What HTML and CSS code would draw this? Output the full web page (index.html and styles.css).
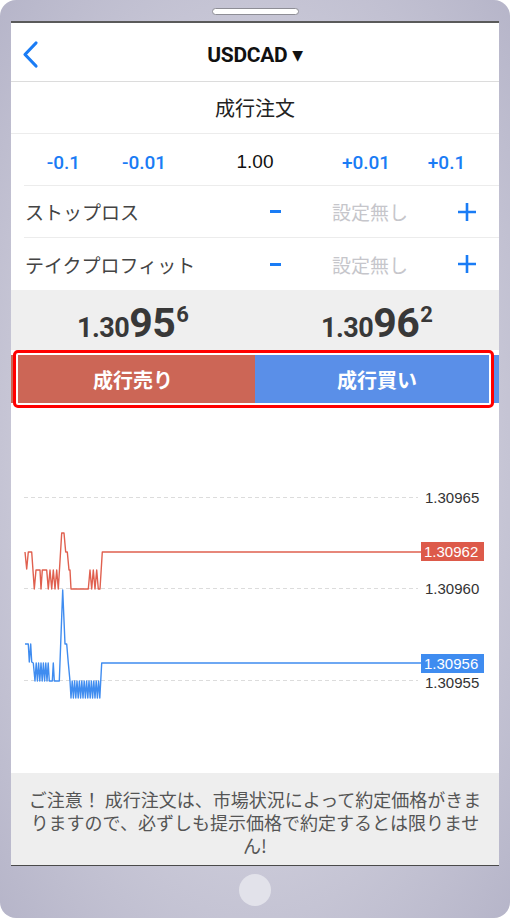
FILE: index.html
```html
<!DOCTYPE html>
<html lang="ja">
<head>
  <meta charset="UTF-8" />
  <meta name="viewport" content="width=device-width, initial-scale=1.0"/>
  <title>USDCAD 成行注文</title>
  <link rel="stylesheet" href="styles.css">
</head>
<body>
  <div class="phone">
    <div class="phone-top"><span class="speaker"></span></div>

    <div class="screen">
      <!-- Navigation -->
      <header class="nav">
        <div class="nav-side">
          <svg class="back" width="20" height="30" viewBox="0 0 20 30">
            <path d="M15 3 L4 14.5 L15 26" fill="none" stroke="#1a7cf5" stroke-width="3.2" stroke-linecap="round" stroke-linejoin="round"/>
          </svg>
        </div>
        <div class="nav-title">USDCAD <span class="caret">&#9660;</span></div>
        <div class="nav-side"></div>
      </header>

      <div class="order-type">成行注文</div>

      <!-- Lot size -->
      <div class="row lot-row">
        <span class="step">-0.1</span>
        <span class="step">-0.01</span>
        <span class="lot">1.00</span>
        <span class="step">+0.01</span>
        <span class="step">+0.1</span>
      </div>

      <!-- Stop loss / take profit -->
      <div class="row sltp-row">
        <span class="sltp-label">ストップロス</span>
        <span class="minus"></span>
        <span class="sltp-value">設定無し</span>
        <svg class="plus" width="20" height="20" viewBox="0 0 20 20">
          <path d="M10 1 V19 M1 10 H19" stroke="#1a7cf5" stroke-width="2.6"/>
        </svg>
      </div>
      <div class="row sltp-row last">
        <span class="sltp-label">テイクプロフィット</span>
        <span class="minus"></span>
        <span class="sltp-value">設定無し</span>
        <svg class="plus" width="20" height="20" viewBox="0 0 20 20">
          <path d="M10 1 V19 M1 10 H19" stroke="#1a7cf5" stroke-width="2.6"/>
        </svg>
      </div>

      <!-- Bid / ask -->
      <div class="prices">
        <div class="price"><span class="p-small">1.30</span><span class="p-big">95</span><span class="p-sup">6</span></div>
        <div class="price"><span class="p-small">1.30</span><span class="p-big">96</span><span class="p-sup">2</span></div>
      </div>

      <div class="actions">
        <button class="btn sell">成行売り</button>
        <button class="btn buy">成行買い</button>
        <div class="highlight"></div>
      </div>

      <!-- Tick chart -->
      <div class="chart">
        <svg width="488" height="365" viewBox="0 0 488 365">
          <g stroke="#dcdcdc" stroke-width="1" stroke-dasharray="4 3">
            <line x1="13" y1="89.5" x2="407" y2="89.5"/>
            <line x1="13" y1="180.5" x2="407" y2="180.5"/>
            <line x1="13" y1="272.5" x2="407" y2="272.5"/>
          </g>
          <g class="axis">
            <text x="414" y="95">1.30965</text>
            <text x="414" y="186">1.30960</text>
            <text x="414" y="280">1.30955</text>
          </g>

          <polyline fill="none" stroke="#e0604f" stroke-width="1.4" stroke-linejoin="round"
            points="14,144 15.7,161 17.3,144 20.7,144 23.3,181 25,162 29,162 30,181 31.3,162 35.7,162 37.3,181 39,162 40.7,181 42.3,162 44,181 45.7,162 47.3,181 50.7,125 53,125 54.7,144 56.3,144 58,162 59,162 60,181 77.3,181 79,162 80.7,181 82.3,162 84,181 85.7,162 87.3,181 89,181 91.3,144 410,144"/>
          <rect x="410" y="134" width="63" height="19" fill="#dd5a4a"/>
          <text class="tag" x="413" y="149">1.30962</text>

          <polyline fill="none" stroke="#3f8cf0" stroke-width="1.4" stroke-linejoin="round"
            points="14,236 17.3,236 18.3,254 19.7,236 20.7,254 22.3,255 24,273 25.2,255 26.4,273 27.6,255 28.8,273 30,255 31.2,273 32.4,255 33.6,273 34.8,255 36,273 37.2,255 38.3,273 41.3,273 42.3,255 43.3,273 48.3,273 51.7,182 54,236 55.7,236 57.3,255 59,273 60,290 61.2,273 62.4,290 63.6,273 64.8,290 66,273 67.2,290 68.4,273 69.6,290 70.8,273 72,290 73.2,273 74.4,290 75.6,273 76.8,290 78,273 79.2,290 80.4,273 81.6,290 82.8,273 84,290 85.2,273 86.4,290 87.6,273 88.8,290 90.7,255 410,255"/>
          <rect x="410" y="246" width="63" height="19" fill="#3f8cf0"/>
          <text class="tag" x="413" y="261">1.30956</text>
        </svg>
      </div>

      <div class="notice">ご注意！ 成行注文は、市場状況によって約定価格がきまりますので、必ずしも提示価格で約定するとは限りません!</div>
    </div>

    <div class="phone-bottom"><span class="home-btn"></span></div>
  </div>
</body>
</html>
```

FILE: styles.css
```css
* {
  box-sizing: border-box;
}

body {
  margin: 0;
  background: #fff;
  font-family: "Noto Sans CJK JP", sans-serif;
}

.phone {
  width: 510px;
  height: 918px;
  padding: 0 11px;
  border-radius: 16px;
  background: radial-gradient(ellipse at center, #cdccda 55%, #b6b5c9 100%);
  display: flex;
  flex-direction: column;
}

.phone-top {
  height: 21px;
  display: flex;
  justify-content: center;
  padding-top: 8px;
}

.speaker {
  width: 87px;
  height: 7px;
  background: #fff;
  border: 1px solid #8e8e96;
  border-radius: 4px;
}

.screen {
  background: #fff;
  border-top: 2px solid #5a5a5a;
  border-bottom: 1px solid #4a4a4a;
  display: flex;
  flex-direction: column;
}

.phone-bottom {
  flex: 1;
  display: flex;
  justify-content: center;
  padding-top: 8px;
}

.home-btn {
  width: 32px;
  height: 32px;
  border-radius: 50%;
  background: #e2e2ea;
}

/* nav */
.nav {
  height: 59px;
  padding-top: 6px;
  border-bottom: 1px solid #dcdcdc;
  display: flex;
  align-items: center;
}

.nav-side {
  width: 70px;
  padding-left: 10px;
  display: flex;
  align-items: center;
}

.nav-title {
  flex: 1;
  text-align: center;
  font-family: Roboto, "Liberation Sans", sans-serif;
  font-weight: bold;
  font-size: 21px;
  letter-spacing: -0.3px;
  color: #111;
}

.caret {
  font-family: "DejaVu Sans", sans-serif;
  font-size: 14px;
  vertical-align: 2px;
}

.order-type {
  height: 52px;
  border-bottom: 1px solid #ececec;
  display: flex;
  align-items: center;
  justify-content: center;
  font-size: 20px;
  color: #222;
}

/* rows */
.row {
  height: 52px;
  margin-left: 13px;
  border-bottom: 1px solid #ececec;
  display: grid;
  align-items: center;
}

.row.last {
  border-bottom: none;
}

.lot-row {
  grid-template-columns: 79px 82px 1fr 82px 79px;
  padding: 5px 13px 0 0;
  justify-items: center;
  font-size: 19px;
}

.step {
  font-family: Roboto, "Liberation Sans", sans-serif;
  font-weight: 500;
  color: #1a7cf5;
}

.lot {
  font-family: "Liberation Sans", sans-serif;
  color: #111;
}

.sltp-row {
  grid-template-columns: 1fr 60px 130px 64px;
  justify-items: center;
}

.sltp-label {
  justify-self: start;
  padding-left: 1px;
  font-size: 19px;
  color: #444;
}

.minus {
  width: 11px;
  height: 3px;
  background: #1a7cf5;
}

.sltp-value {
  font-size: 19px;
  color: #c6c6cb;
}

/* prices */
.prices {
  height: 60px;
  background: #efefef;
  display: flex;
}

.price {
  flex: 1;
  display: flex;
  justify-content: center;
  align-items: flex-end;
  padding-bottom: 8px;
  font-family: Roboto, "Liberation Sans", sans-serif;
  font-weight: bold;
  color: #383838;
  line-height: 1;
}

.p-small {
  font-size: 27px;
  letter-spacing: -0.5px;
}

.p-big {
  font-size: 41px;
  line-height: 0.9;
  letter-spacing: -0.5px;
}

.p-sup {
  font-size: 22px;
  align-self: flex-start;
  padding-top: 14px;
  margin-left: 1px;
}

/* order buttons */
.actions {
  position: relative;
  height: 58px;
  padding: 5px 0;
  display: flex;
}

.btn {
  flex: 1;
  border: none;
  margin: 0;
  color: #fff;
  font-family: "Noto Sans CJK JP", sans-serif;
  font-size: 20px;
  font-weight: bold;
}

.sell {
  background: #cc6656;
}

.buy {
  background: #5a8fe8;
}

.highlight {
  position: absolute;
  left: 2px;
  top: 0;
  width: 481px;
  height: 58px;
  border: 3px solid #f00;
  border-radius: 5px;
  box-shadow: inset 0 0 0 2px #fff;
}

/* chart */
.chart {
  height: 365px;
}

.chart svg {
  display: block;
}

.axis text {
  font-family: "Liberation Sans", sans-serif;
  font-size: 15px;
  fill: #333;
}

.tag {
  font-family: "Liberation Sans", sans-serif;
  font-size: 15px;
  fill: #fff;
}

.notice {
  height: 92px;
  background: #eee;
  padding: 15px 14px 0;
  text-align: center;
  font-size: 18px;
  line-height: 23px;
  color: #555;
}
```
